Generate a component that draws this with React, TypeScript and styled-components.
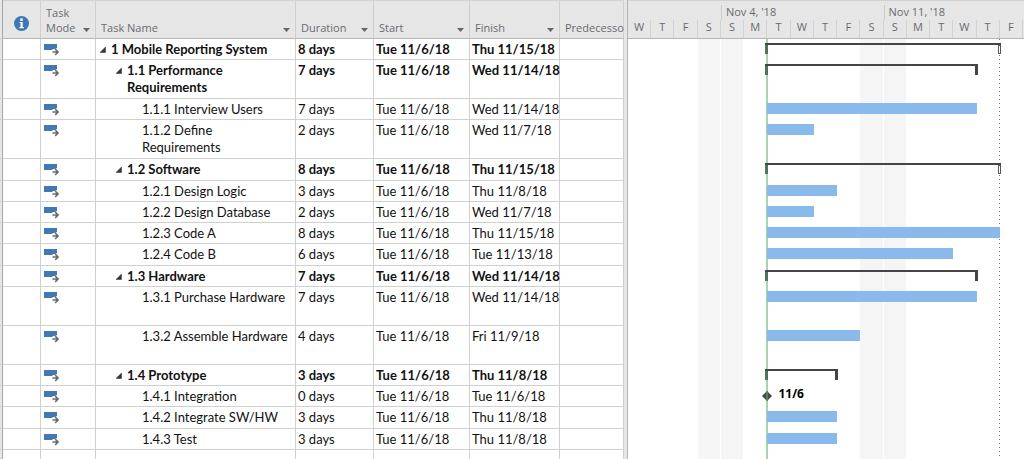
import React from 'react';
import styled, { createGlobalStyle } from 'styled-components';

const GlobalStyle = createGlobalStyle`
  *, *::before, *::after { box-sizing: border-box; }
  body {
    margin: 0;
    background: #fff;
    color: #111;
    font: 13px/17px Lato, "Liberation Sans", sans-serif;
  }
  button { border: 0; padding: 0; background: none; cursor: pointer; }
`;

const HEADER_HEIGHT = 39;
const DAYS = ['W', 'T', 'F', 'S', 'S', 'M', 'T', 'W', 'T', 'F', 'S', 'S', 'M', 'T', 'W', 'T', 'F'];
const WEEKS = [
  { label: '', span: 4 },
  { label: "Nov 4, '18", span: 7 },
  { label: "Nov 11, '18", span: 6 },
];
const START_COLUMN = 7;
const INDENTS = [15, 31, 46];

type Task = {
  name: string;
  level: number;
  duration: string;
  finish: string;
  days: number;
  height: number;
  last?: boolean;
};

const TASKS: Task[] = [
  { name: '1 Mobile Reporting System', level: 0, duration: '8 days', finish: 'Thu 11/15/18', days: 10, height: 21, last: true },
  { name: '1.1 Performance\nRequirements', level: 1, duration: '7 days', finish: 'Wed 11/14/18', days: 9, height: 39 },
  { name: '1.1.1 Interview Users', level: 2, duration: '7 days', finish: 'Wed 11/14/18', days: 9, height: 21 },
  { name: '1.1.2 Define\nRequirements', level: 2, duration: '2 days', finish: 'Wed 11/7/18', days: 2, height: 39 },
  { name: '1.2 Software', level: 1, duration: '8 days', finish: 'Thu 11/15/18', days: 10, height: 22, last: true },
  { name: '1.2.1 Design Logic', level: 2, duration: '3 days', finish: 'Thu 11/8/18', days: 3, height: 21 },
  { name: '1.2.2 Design Database', level: 2, duration: '2 days', finish: 'Wed 11/7/18', days: 2, height: 21 },
  { name: '1.2.3 Code A', level: 2, duration: '8 days', finish: 'Thu 11/15/18', days: 10, height: 21 },
  { name: '1.2.4 Code B', level: 2, duration: '6 days', finish: 'Tue 11/13/18', days: 8, height: 22 },
  { name: '1.3 Hardware', level: 1, duration: '7 days', finish: 'Wed 11/14/18', days: 9, height: 21 },
  { name: '1.3.1 Purchase Hardware', level: 2, duration: '7 days', finish: 'Wed 11/14/18', days: 9, height: 39 },
  { name: '1.3.2 Assemble Hardware', level: 2, duration: '4 days', finish: 'Fri 11/9/18', days: 4, height: 39 },
  { name: '1.4 Prototype', level: 1, duration: '3 days', finish: 'Thu 11/8/18', days: 3, height: 21 },
  { name: '1.4.1 Integration', level: 2, duration: '0 days', finish: 'Tue 11/6/18', days: 0, height: 21 },
  { name: '1.4.2 Integrate SW/HW', level: 2, duration: '3 days', finish: 'Thu 11/8/18', days: 3, height: 22 },
  { name: '1.4.3 Test', level: 2, duration: '3 days', finish: 'Thu 11/8/18', days: 3, height: 21 },
];

const Page = styled.main`
  display: flex;
  min-height: 100vh;
  overflow: hidden;
`;

const TaskTable = styled.table`
  flex: none;
  width: 624px;
  height: 100vh;
  table-layout: fixed;
  border-collapse: separate;
  border-spacing: 0;
`;

const HeadCell = styled.th`
  height: ${HEADER_HEIGHT}px;
  padding: 3px 5px 1px;
  vertical-align: bottom;
  text-align: left;
  background: #e6e6e6;
  border-top: 1px solid #d2d2d2;
  border-right: 1px solid #cfcfcf;
  border-bottom: 1px solid #b4b4b4;
  color: #6a6b70;
  font: 400 11px/15px "Open Sans", "Noto Sans", sans-serif;
  white-space: pre;
`;

const HeadContent = styled.div`
  display: flex;
  align-items: flex-end;
  justify-content: space-between;
  padding-bottom: 2px;
`;

const InfoHead = styled.div`
  display: flex;
  justify-content: center;
  padding-bottom: 6px;
`;

const FilterButton = styled.button`
  display: flex;
  padding-bottom: 3px;
`;

const Row = styled.tr<{ $height?: number; $bold?: boolean }>`
  height: ${(p) => (p.$height ? `${p.$height}px` : 'auto')};
  font-weight: ${(p) => (p.$bold ? 700 : 400)};
`;

const Cell = styled.td`
  padding: 2px 2px 0;
  vertical-align: top;
  border-right: 1px solid #d0d0d0;
  border-bottom: 1px solid #d0d0d0;
  white-space: pre;
`;

const BlankCell = styled(Cell)`
  border-bottom: 0;
`;

const EdgeCell = styled.td`
  padding: 0;
  background: #e6e6e6;
  border-right: 1px solid #a6a6a6;
  border-bottom: 1px solid #d0d0d0;
`;

const ModeCell = styled(Cell)`
  padding: 5px 3px 0;
  line-height: 0;
`;

const NameContent = styled.div<{ $level: number }>`
  display: flex;
  gap: 5px;
  padding-left: ${(p) => INDENTS[p.$level] - 2 - (p.$level < 2 ? 11 : 0)}px;
`;

const CollapseButton = styled.button`
  flex: none;
  width: 6px;
  height: 17px;
  display: flex;
  align-items: center;
`;

const Splitter = styled.div`
  flex: none;
  width: 4px;
  background: #e6e6e6;
  border-right: 1px solid #b4b4b4;
`;

const Chart = styled.section`
  flex: 1;
  min-width: 0;
  display: flex;
  flex-direction: column;
`;

const Timescale = styled.header`
  height: ${HEADER_HEIGHT}px;
  padding: 4px 1px 0 0;
  background: #e6e6e6;
  border-top: 1px solid #d2d2d2;
  border-bottom: 1px solid #b4b4b4;
  color: #6a6b70;
  font: 11px/14px "Open Sans", "Noto Sans", sans-serif;
`;

const DayGrid = styled.div`
  display: grid;
  grid-template-columns: repeat(${DAYS.length}, minmax(0, 1fr));
`;

const Week = styled.div<{ $span: number }>`
  grid-column: span ${(p) => p.$span};
  height: 15px;
  padding: 0 4px;
  border-left: 1px solid ${(p) => (p.$span > 4 ? '#cdcdcd' : 'transparent')};
  white-space: nowrap;
`;

const Day = styled.div`
  height: 18px;
  text-align: center;
  border-right: 1px solid #d2d2d2;
`;

const Plot = styled.div`
  position: relative;
  flex: 1;
`;

const Backdrop = styled(DayGrid)`
  position: absolute;
  inset: 0;
  padding-right: 1px;
`;

const Weekend = styled.div<{ $column: number }>`
  grid-column: ${(p) => p.$column};
  grid-row: 1;
  background: #f5f5f5;
  border-right: 1px solid #fff;
`;

const StartLine = styled.div`
  grid-column: ${START_COLUMN};
  grid-row: 1;
  margin-left: -1px;
  border-left: 2px solid #a9d5ae;
`;

const DeadlineLine = styled.div`
  grid-column: 17;
  grid-row: 1;
  width: 1px;
  margin-left: -1px;
  background: repeating-linear-gradient(#777 0 1px, transparent 1px 4px);
`;

const ChartRow = styled(DayGrid)<{ $height: number }>`
  position: relative;
  height: ${(p) => p.$height}px;
  padding: 4px 1px 0 0;
  align-items: start;
`;

const Bar = styled.div<{ $days: number }>`
  grid-column: ${START_COLUMN} / span ${(p) => p.$days};
  height: 11px;
  background: #8ab9ec;
`;

const Summary = styled.div<{ $days: number }>`
  grid-column: ${START_COLUMN} / span ${(p) => p.$days};
  display: flex;
  justify-content: space-between;
  height: 11px;
  margin: 0 -1px 0 -2px;
  border-top: 2px solid #454545;
`;

const Leg = styled.span<{ $kind: 'start' | 'end' | 'hollow' }>`
  width: 3px;
  background: ${(p) => ({ start: '#56705a', end: '#454545', hollow: '#fff' })[p.$kind]};
  border: ${(p) => (p.$kind === 'hollow' ? '1px solid #555' : '0')};
`;

const Milestone = styled.div`
  grid-column: ${START_COLUMN} / span 3;
  display: flex;
  align-items: center;
  gap: 6px;
  margin-left: -5px;
  height: 11px;
  color: #000;
  font: 700 12px/16px "Open Sans", "Noto Sans", sans-serif;
`;

const MilestoneDate = styled.span`
  padding-bottom: 3px;
`;

const InfoIcon = () => (
  <svg width="15" height="15" viewBox="0 0 15 15" aria-label="Indicators">
    <circle cx="7.5" cy="7.5" r="7.5" fill="#3c78b4" />
    <circle cx="7.5" cy="3.7" r="1.4" fill="#fff" />
    <path d="M5.5 6h3.2v5h1.1v1.2H5.4V11h1.1V7.1h-1z" fill="#fff" />
  </svg>
);

const ModeIcon = () => (
  <svg width="16" height="12" viewBox="0 0 16 12" aria-label="Auto scheduled">
    <path d="M0 0h13v5H8.5v1H0z" fill="#4279b5" />
    <path d="M8.5 8h4.5M11.2 5.2L14 8l-2.8 2.8" fill="none" stroke="#fff" strokeWidth="3.2" />
    <path d="M8.5 8h5.3M11.2 5.1L14.1 8l-2.9 2.9" fill="none" stroke="#6b6b6b" strokeWidth="1.6" />
  </svg>
);

const FilterArrow = () => (
  <svg width="7" height="4" viewBox="0 0 7 4" aria-hidden="true">
    <path d="M0 0h7L3.5 4z" fill="#666" />
  </svg>
);

const CollapseArrow = () => (
  <svg width="6" height="6" viewBox="0 0 6 6" aria-hidden="true">
    <path d="M5.5 0v5.5H0z" fill="#333" stroke="#333" strokeWidth=".5" />
  </svg>
);

const Diamond = () => (
  <svg width="10" height="10" viewBox="0 0 10 10" aria-label="Milestone">
    <path d="M5 0l5 5-5 5-5-5z" fill="#4a4a4a" />
    <path d="M4 1l1-1 1 1v8l-1 1-1-1z" fill="#5f7d63" />
  </svg>
);

const Heading = ({ label, filter = true }: { label: string; filter?: boolean }) => (
  <HeadCell scope="col">
    <HeadContent>
      <span>{label}</span>
      {filter && (
        <FilterButton type="button" aria-label={`Filter ${label.replace('\n', ' ')}`}>
          <FilterArrow />
        </FilterButton>
      )}
    </HeadContent>
  </HeadCell>
);

const TaskRow = ({ task }: { task: Task }) => (
  <Row $height={task.height} $bold={task.level < 2}>
    <EdgeCell />
    <Cell />
    <ModeCell><ModeIcon /></ModeCell>
    <Cell>
      <NameContent $level={task.level}>
        {task.level < 2 && (
          <CollapseButton type="button" aria-label={`Collapse ${task.name}`}>
            <CollapseArrow />
          </CollapseButton>
        )}
        <span>{task.name}</span>
      </NameContent>
    </Cell>
    <Cell>{task.duration}</Cell>
    <Cell>Tue 11/6/18</Cell>
    <Cell>{task.finish}</Cell>
    <Cell />
  </Row>
);

const ChartItem = ({ task }: { task: Task }) => {
  if (task.days === 0) {
    return <Milestone><Diamond /><MilestoneDate>11/6</MilestoneDate></Milestone>;
  }
  if (task.level < 2) {
    return (
      <Summary $days={task.days}>
        <Leg $kind="start" />
        <Leg $kind={task.last ? 'hollow' : 'end'} />
      </Summary>
    );
  }
  return <Bar $days={task.days} />;
};

export default function App() {
  return (
    <>
      <GlobalStyle />
      <Page>
        <TaskTable>
          <colgroup>
            {[3, 38, 55, 200, 78, 96, 90, 64].map((width, i) => (
              <col key={i} width={width} />
            ))}
          </colgroup>
          <thead>
            <tr>
              <EdgeCell />
              <HeadCell scope="col"><InfoHead><InfoIcon /></InfoHead></HeadCell>
              <Heading label={'Task\nMode'} />
              <Heading label="Task Name" />
              <Heading label="Duration" />
              <Heading label="Start" />
              <Heading label="Finish" />
              <Heading label="Predecesso" filter={false} />
            </tr>
          </thead>
          <tbody>
            {TASKS.map((task) => <TaskRow key={task.name} task={task} />)}
            <Row>
              <EdgeCell />
              {[1, 2, 3, 4, 5, 6, 7].map((column) => <BlankCell key={column} />)}
            </Row>
          </tbody>
        </TaskTable>
        <Splitter />
        <Chart>
          <Timescale>
            <DayGrid>
              {WEEKS.map((week) => <Week key={week.label} $span={week.span}>{week.label}</Week>)}
            </DayGrid>
            <DayGrid>
              {DAYS.map((day, i) => <Day key={i}>{day}</Day>)}
            </DayGrid>
          </Timescale>
          <Plot>
            <Backdrop>
              {[4, 5, 11, 12].map((column) => <Weekend key={column} $column={column} />)}
              <StartLine />
              <DeadlineLine />
            </Backdrop>
            {TASKS.map((task) => (
              <ChartRow key={task.name} $height={task.height}>
                <ChartItem task={task} />
              </ChartRow>
            ))}
          </Plot>
        </Chart>
      </Page>
    </>
  );
}
